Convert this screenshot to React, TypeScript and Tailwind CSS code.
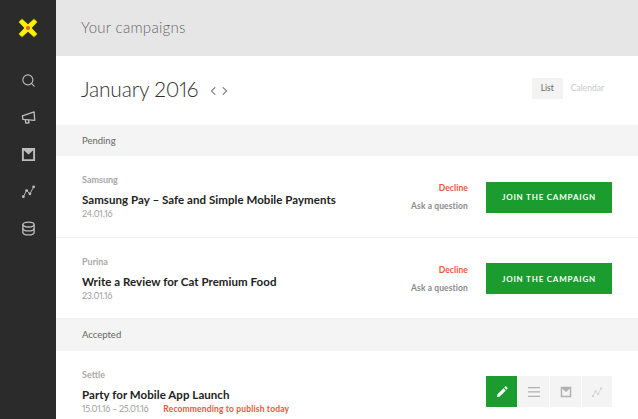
import { Search } from 'lucide-react';

const InboxBox = ({ className }: { className: string }) => (
  <svg viewBox="0 0 16 16" className={className} fill="currentColor">
    <path fillRule="evenodd" d="M1 1h14v14H1V1zm2 2.4V13h10V3.4L8 8 3 3.4z" />
    <path d="M3.5 3h9L8 7z" opacity="0.55" />
  </svg>
);

const Chart = ({ className }: { className: string }) => (
  <svg viewBox="0 0 16 16" className={className} fill="none" stroke="currentColor" strokeWidth="1">
    <path d="M2.5 13.5 L6 7 L9.5 10.5 L13.5 3" />
    <circle cx="2.5" cy="13.5" r="1.5" fill="currentColor" stroke="none" />
    <circle cx="6" cy="7" r="1.5" fill="currentColor" stroke="none" />
    <circle cx="9.5" cy="10.5" r="1.5" fill="currentColor" stroke="none" />
    <circle cx="13.5" cy="3" r="1.5" fill="currentColor" stroke="none" />
  </svg>
);

const Megaphone = ({ className }: { className: string }) => (
  <svg viewBox="0 0 16 16" className={className} fill="none" stroke="currentColor" strokeWidth="1.4" strokeLinejoin="round">
    <path d="M1.5 6.2 L14 2 L14.6 11 L2 10 Z" />
    <path d="M4.5 10.2 L5.2 14 L8.6 13.6 L8 10.5" />
  </svg>
);

const Database = ({ className }: { className: string }) => (
  <svg viewBox="0 0 16 16" className={className} fill="none" stroke="currentColor" strokeWidth="1.4">
    <ellipse cx="8" cy="3.8" rx="6" ry="2.6" />
    <path d="M2 3.8v8.4c0 1.4 2.7 2.6 6 2.6s6-1.2 6-2.6V3.8" />
    <path d="M2 8c0 1.4 2.7 2.6 6 2.6S14 9.4 14 8" />
  </svg>
);

const Logo = () => (
  <svg viewBox="0 0 20 20" className="h-[20px] w-[20px]">
    <path d="M4 0.6 L10 6 L16 0.6 L19.6 4 L14 10 L19.6 16 L16 19.4 L10 14 L4 19.4 L0.4 16 L6 10 L0.4 4 Z" fill="#fff200" stroke="#111" strokeWidth="0.5" />
    <circle cx="10" cy="10" r="2.1" fill="#f0592a" />
  </svg>
);

const Section = ({ label, height }: { label: string; height: string }) => (
  <div className={`flex items-center bg-[#f4f4f4] pt-[1px] pl-[26px] text-[9.5px] text-[#666] ${height}`}>
    {label}
  </div>
);

const Actions = () => (
  <div className="flex items-center gap-[18px] pt-[1px]">
    <div className="flex flex-col items-end gap-[8px] text-[8.5px] font-bold leading-[10px] tracking-[0.1px]">
      <a className="text-[#f2553d]">Decline</a>
      <a className="text-[#8a8a8a]">Ask a question</a>
    </div>
    <button
      type="button"
      className="h-[31px] w-[126px] bg-[#1a9c2e] text-[8px] font-bold tracking-[0.8px] text-white"
    >
      JOIN THE CAMPAIGN
    </button>
  </div>
);

const Campaign = ({ brand, title, date, height }: { brand: string; title: string; date: string; height: string }) => (
  <div className={`flex items-center justify-between border-b border-[#f1f1f1] px-[26px] ${height}`}>
    <div className="flex flex-col pt-[1px]">
      <span className="text-[9px] font-bold leading-[12px] text-[#a8a8a8]">{brand}</span>
      <span className="mt-[7px] text-[11.5px] font-bold leading-[14px] tracking-[0.05px] text-[#222]">{title}</span>
      <span className="text-[9px] leading-[13px] tracking-[-0.25px] text-[#a0a0a0] proportional-nums">{date}</span>
    </div>
    <Actions />
  </div>
);

export default function App() {
  return (
    <div className="flex h-[419px] w-[638px] overflow-hidden bg-white font-['Lato',sans-serif]">
      <aside className="flex w-[56px] shrink-0 flex-col items-center bg-[#2b2b2b] text-[#bdbdbd]">
        <div className="flex h-[56px] items-center justify-center">
          <Logo />
        </div>
        <nav className="flex flex-col items-center gap-[22px] pt-[17px]">
          <Search className="h-[15px] w-[15px]" strokeWidth={1.8} />
          <Megaphone className="h-[15px] w-[15px]" />
          <InboxBox className="h-[15px] w-[15px]" />
          <Chart className="h-[15px] w-[15px]" />
          <Database className="h-[15px] w-[15px]" />
        </nav>
      </aside>

      <main className="min-w-0 flex-1">
        <header className="flex h-[56px] items-center bg-[#e6e6e6] pb-[1px] pl-[25px] text-[15px] font-light tracking-[0.3px] text-[#666]">
          Your campaigns
        </header>

        <div className="flex h-[69px] items-center justify-between pr-[34px] pl-[25px]">
          <div className="flex items-center gap-[12px]">
            <h1 className="pb-[3px] text-[21px] font-light tracking-[-0.2px] text-[#333] proportional-nums">January 2016</h1>
            <div className="flex items-center gap-[6px] text-[#666]">
              <svg viewBox="0 0 8 12" className="h-[10px] w-[6px]" fill="none" stroke="currentColor" strokeWidth="1.4"><path d="M7 1 2 6l5 5" /></svg>
              <svg viewBox="0 0 8 12" className="h-[10px] w-[6px]" fill="none" stroke="currentColor" strokeWidth="1.4"><path d="m1 1 5 5-5 5" /></svg>
            </div>
          </div>
          <div className="flex items-center pb-[4px] text-[8.5px]">
            <span className="flex h-[21px] w-[31px] items-center justify-center bg-[#f3f3f3] text-[#666]">List</span>
            <span className="ml-[8px] text-[#c8c8c8]">Calendar</span>
          </div>
        </div>

        <Section label="Pending" height="h-[31px]" />
        <Campaign brand="Samsung" title="Samsung Pay – Safe and Simple Mobile Payments" date="24.01.16" height="h-[82px]" />
        <Campaign brand="Purina" title="Write a Review for Cat Premium Food" date="23.01.16" height="h-[81px]" />
        <Section label="Accepted" height="h-[32px]" />

        <div className="flex h-[81px] items-center justify-between px-[26px]">
          <div className="flex flex-col pt-[1px]">
            <span className="text-[9px] font-bold leading-[12px] text-[#a8a8a8]">Settle</span>
            <span className="mt-[7px] text-[11.5px] font-bold leading-[14px] tracking-[0.05px] text-[#222]">Party for Mobile App Launch</span>
            <span className="text-[9px] leading-[13px] tracking-[-0.3px] text-[#a0a0a0] proportional-nums">
              15.01.16 – 25.01.16
              <span className="ml-[15px] text-[8.5px] font-bold tracking-[0.15px] text-[#f2553d]">Recommending to publish today</span>
            </span>
          </div>
          <div className="flex gap-px">
            <div className="flex h-[31px] w-[31px] items-center justify-center bg-[#1a9c2e]">
              <svg viewBox="0 0 16 16" className="h-[12px] w-[12px]" fill="#fff"><path d="M1 15l1-4 8-8 3 3-8 8-4 1zM11 2l1.2-1.2a1 1 0 0 1 1.4 0l1.6 1.6a1 1 0 0 1 0 1.4L14 5z" /></svg>
            </div>
            <div className="flex h-[31px] w-[31px] items-center justify-center bg-[#f4f4f4] text-[#b0b0b0]">
              <svg viewBox="0 0 12 12" className="h-[12px] w-[12px]" fill="currentColor"><path d="M0 1h12v1.3H0zM0 5.3h12v1.3H0zM0 9.7h12V11H0z" /></svg>
            </div>
            <div className="flex h-[31px] w-[31px] items-center justify-center bg-[#f4f4f4] text-[#b0b0b0]">
              <InboxBox className="h-[12px] w-[12px]" />
            </div>
            <div className="flex h-[31px] w-[30px] items-center justify-center bg-[#f4f4f4] text-[#d0d0d0]">
              <Chart className="h-[12px] w-[12px]" />
            </div>
          </div>
        </div>
      </main>
    </div>
  );
}
